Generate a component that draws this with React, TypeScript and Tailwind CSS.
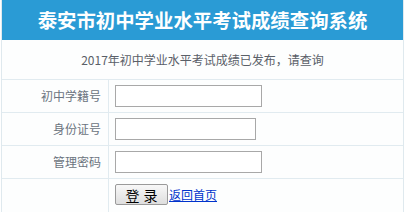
const font = "font-['Microsoft_YaHei','Noto_Sans_CJK_SC',sans-serif]"

function FieldRow({ label, inputWidth }: { label: string; inputWidth: string }) {
  return (
    <div className="grid grid-cols-[107px_1fr] border-b border-[#e1ebf0]">
      <div className="h-[32px] border-r border-[#e1ebf0] flex items-center justify-end pr-[7px] text-[12px] text-[#6b7480]">
        {label}
      </div>
      <div className="h-[32px] flex items-center pl-[6px]">
        <input
          type="text"
          className={`${inputWidth} h-[22px] border border-[#a8a8a8] bg-white outline-none`}
        />
      </div>
    </div>
  )
}

export default function App() {
  return (
    <div className={`${font} w-[406px] h-[212px] bg-white overflow-hidden`}>
      <div className="ml-[1px] w-[403px] h-[212px] border-x border-[#dfe9ee] bg-[#fdfefe]">
        {/* Title bar */}
        <div className="h-[40px] bg-[#2a9bd5] flex items-center justify-center text-white text-[19.4px] leading-none font-bold whitespace-nowrap">
          泰安市初中学业水平考试成绩查询系统
        </div>

        {/* Notice */}
        <div className="h-[40px] border-b border-[#e1ebf0] flex items-center justify-center text-[12px] text-[#5a6068]">
          2017年初中学业水平考试成绩已发布，请查询
        </div>

        <FieldRow label="初中学籍号" inputWidth="w-[147px]" />
        <FieldRow label="身份证号" inputWidth="w-[141px]" />
        <FieldRow label="管理密码" inputWidth="w-[147px]" />

        {/* Actions */}
        <div className="grid grid-cols-[107px_1fr] h-[33px]">
          <div className="border-r border-[#e1ebf0]" />
          <div className="flex items-start pl-[6px] pt-[5px]">
            <button
              type="button"
              className="w-[53px] h-[21px] border border-[#9a9a9a] rounded-[2px] bg-gradient-to-b from-[#f8f8f8] to-[#dedede] text-[14px] leading-none text-black tracking-[4px] pl-[4px]"
            >
              登录
            </button>
            <a href="#" className="ml-[1px] mt-[3px] text-[12px] leading-[16px] text-[#0033cc] underline">
              返回首页
            </a>
          </div>
        </div>
      </div>
    </div>
  )
}
